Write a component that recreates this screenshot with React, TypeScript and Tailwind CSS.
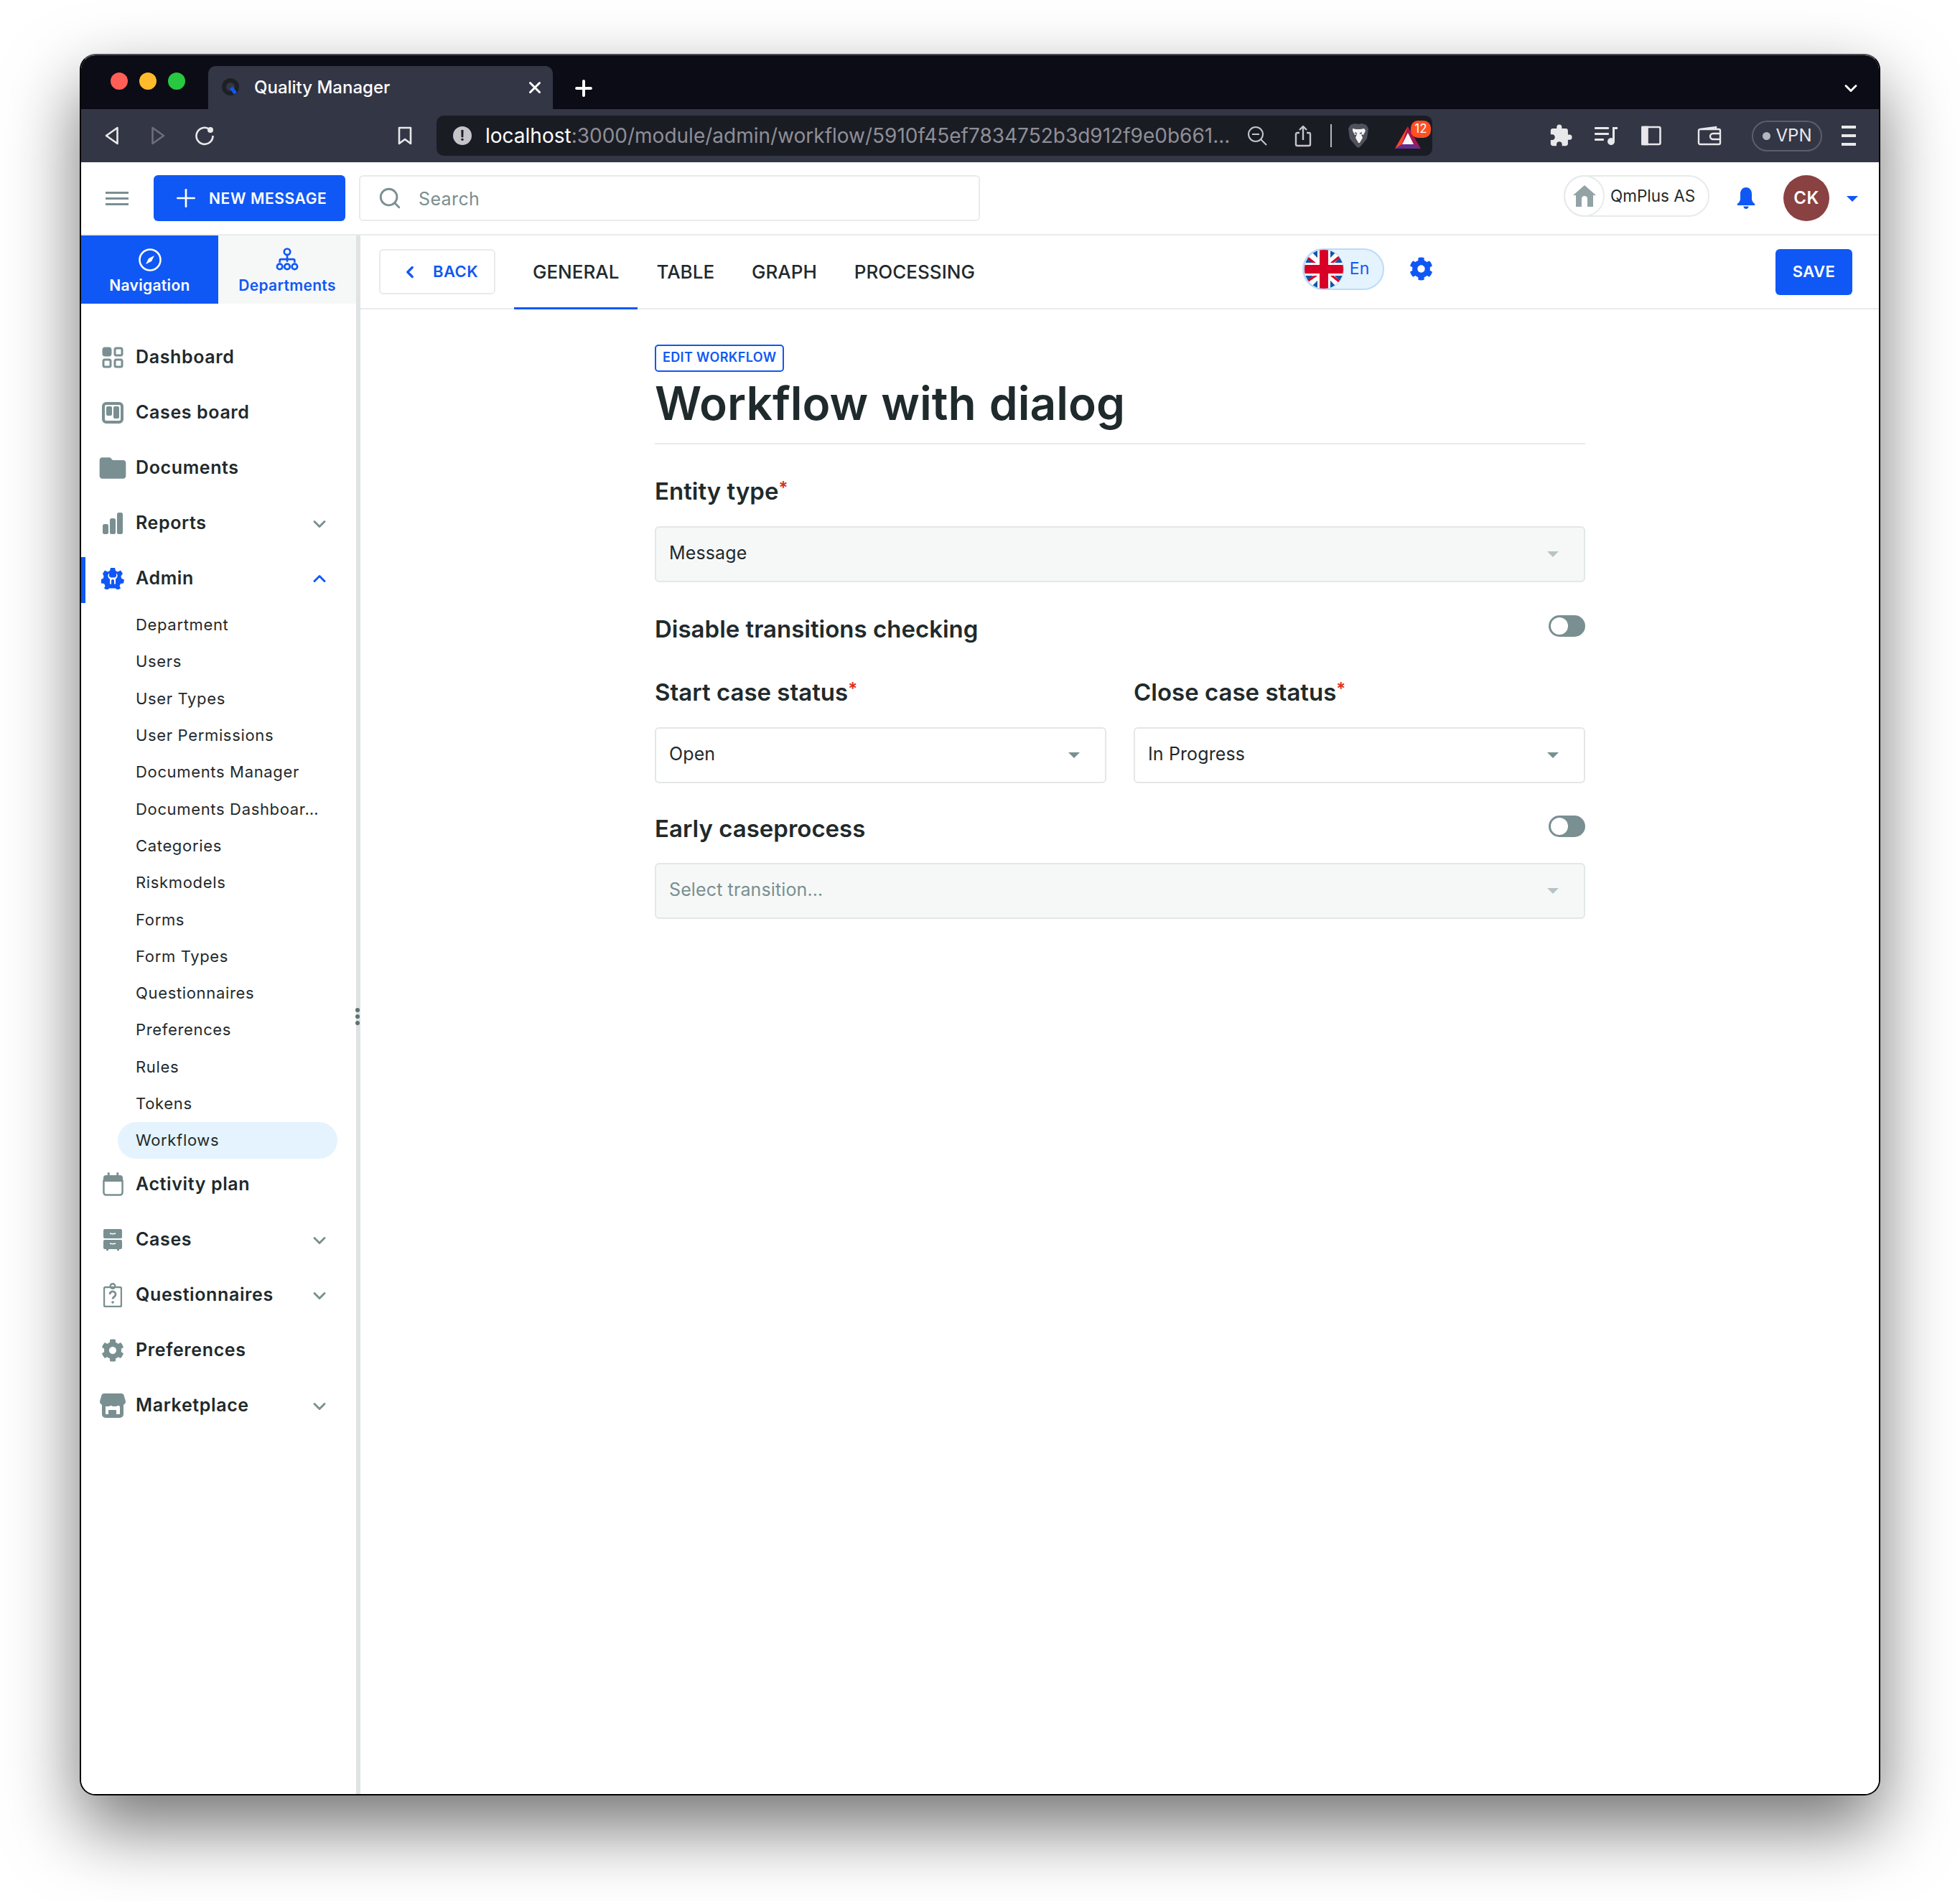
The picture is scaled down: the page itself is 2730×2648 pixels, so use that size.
import React from 'react';
import { ChevronDown, ChevronLeft, ChevronUp, Plus, Search, X } from 'lucide-react';
import { FaCog } from 'react-icons/fa';
import { MdExtension, MdFolder } from 'react-icons/md';

const gray = 'text-[#7a8f91]';

function Back({ className }: { className?: string }) {
  return (
    <svg viewBox="0 0 20 26" className={className} fill="none" stroke="currentColor" strokeWidth="2.6" strokeLinejoin="round">
      <path d="M17.5 2 2 13l15.500 11z" />
    </svg>
  );
}

function DashboardIcon() {
  return (
    <svg viewBox="0 0 30 30" className={`w-[30px] h-[30px] ${gray}`} fill="none" stroke="currentColor" strokeWidth="3">
      <rect x="2" y="2" width="10" height="10" rx="2.500" fill="currentColor" />
      <rect x="18" y="2" width="10" height="10" rx="2" />
      <rect x="2" y="18" width="10" height="10" rx="2" />
      <rect x="18" y="18" width="10" height="10" rx="2" />
    </svg>
  );
}

function BoardIcon() {
  return (
    <svg viewBox="0 0 30 30" className={`w-[30px] h-[30px] ${gray}`} fill="currentColor">
      <path fillRule="evenodd" d="M6 0h18a6 6 0 0 1 6 6v18a6 6 0 0 1-6 6H6a6 6 0 0 1-6-6V6a6 6 0 0 1 6-6zm0 4a2 2 0 0 0-2 2v18a2 2 0 0 0 2 2h18a2 2 0 0 0 2-2V6a2 2 0 0 0-2-2z" />
      <rect x="6" y="6" width="8" height="13" rx="2" />
      <rect x="16" y="6" width="8" height="17" rx="2" />
    </svg>
  );
}

function BarsIcon() {
  return (
    <svg viewBox="0 0 28 30" className={`w-[28px] h-[30px] ${gray}`} fill="currentColor">
      <rect x="0" y="16" width="8" height="14" rx="2.500" />
      <rect x="10" y="8" width="8" height="22" rx="2.500" />
      <rect x="20" y="0" width="8" height="30" rx="2.500" />
    </svg>
  );
}

function AdminIcon() {
  return (
    <svg viewBox="0 0 32 30" className="w-[32px] h-[30px] text-[#1058f5]" fill="currentColor">
      <path d="M13 0h6l1 4 3 1.500 4-2 3 4.500-2.500 3.500.5 3 4 2-1 5-4 .5-1.500 3 1.500 3.500-4.500 2.500-2.500-2.500h-9l-2.500 2.500-4.500-2.500 1.500-3.500-1.500-3-4-.5-1-5 4-2 .5-3L2 8l3-4.500 4 2L12 4z" />
      <path d="M11 7.500c-2.500 2.500-2 6 1 8v7h8v-7c3-2 3.500-5.500 1-8v4.500l-2.500 1.500h-5L11 12z" fill="#fff" />
      <rect x="14" y="16" width="4" height="8" rx="2" />
    </svg>
  );
}

function CalendarIcon() {
  return (
    <svg viewBox="0 0 30 34" className={`w-[29px] h-[33px] ${gray}`} fill="none" stroke="currentColor" strokeWidth="2.600">
      <path d="M1.500 12h27v17a3.500 3.500 0 0 1-3.500 3.500H5A3.500 3.500 0 0 1 1.500 29z" />
      <path d="M5 4h20a4 4 0 0 1 4 4v5H1V8a4 4 0 0 1 4-4z" fill="currentColor" stroke="none" />
      <rect x="7" y="0" width="3" height="6" rx="1.500" fill="currentColor" stroke="none" />
      <rect x="20" y="0" width="3" height="6" rx="1.500" fill="currentColor" stroke="none" />
    </svg>
  );
}

function DrawerIcon() {
  return (
    <svg viewBox="0 0 26 30" className={`w-[26px] h-[30px] ${gray}`} fill="currentColor">
      <rect x="0" y="0" width="26" height="13" rx="2" />
      <rect x="0" y="15" width="26" height="13" rx="2" />
      <rect x="4" y="27" width="3" height="3" />
      <rect x="19" y="27" width="3" height="3" />
      <path d="M9 6q4 1.500 8 0M9 20q4 1.500 8 0" stroke="#fff" strokeWidth="1.500" fill="none" />
    </svg>
  );
}

function ClipboardIcon() {
  return (
    <svg viewBox="0 0 26 34" className={`w-[26px] h-[34px] ${gray}`} fill="none" stroke="currentColor" strokeWidth="2.400">
      <path d="M8 6H3a2 2 0 0 0-2 2v23a2 2 0 0 0 2 2h20a2 2 0 0 0 2-2V8a2 2 0 0 0-2-2h-5" />
      <circle cx="13" cy="4.500" r="3.300" />
      <path d="M8 6h10" />
      <path d="M9 16a4 4 0 1 1 6.500 3c-1.500 1-2.500 1.800-2.500 3.500" strokeWidth="2.800" />
      <circle cx="13" cy="27" r="1.800" fill="currentColor" stroke="none" />
    </svg>
  );
}

function StoreIcon() {
  return (
    <svg viewBox="0 0 36 34" className={`w-[37px] h-[34px] ${gray}`} fill="currentColor">
      <path d="M6 0h24c2 0 3 1 3.500 2.500L36 11c0 3-2 5-5 5H5c-3 0-5-2-5-5l2.500-8.500C3 1 4 0 6 0z" />
      <path fillRule="evenodd" d="M3 12h30v17a5 5 0 0 1-5 5H8a5 5 0 0 1-5-5zm5 6v10a1 1 0 0 0 1 1h3v-6h11v6h4a1 1 0 0 0 1-1V18z" />
      <path d="M8 18q2.500 2 5 0t5 0 5 0 5 0v3H8z" fill="#fff" />
    </svg>
  );
}

function HomeIcon() {
  return (
    <svg viewBox="0 0 32 30" className="w-[32px] h-[30px] text-[#93a3a5]" fill="currentColor">
      <path fillRule="evenodd" d="M16 0 32 14h-4v16h-8V19a4 4 0 0 0-8 0v11H4V14H0z" />
    </svg>
  );
}

function BellIcon() {
  return (
    <svg viewBox="0 0 26 30" className="w-[26px] h-[30px] text-[#1058f5]" fill="currentColor">
      <path d="M13 0c5 0 8 4 8 9v7c0 3 2 5 4 7 1 1 .5 2-1 2H2c-1.500 0-2-1-1-2 2-2 4-4 4-7V9c0-5 3-9 8-9z" />
      <path d="M9.500 26.500h7c0 2-1.500 3.500-3.500 3.500s-3.500-1.500-3.500-3.500z" />
    </svg>
  );
}

function UkFlag() {
  return (
    <svg viewBox="0 0 56 58" className="w-[56px] h-[58px] shrink-0">
      <clipPath id="flag"><circle cx="28" cy="29" r="27.500" /></clipPath>
      <g clipPath="url(#flag)">
        <rect width="56" height="58" fill="#0f57a8" />
        <path d="M0 0l56 58M56 0 0 58" stroke="#fff" strokeWidth="9" />
        <path d="M2 10l16 13M54 8 38 21M2 48l16-11M54 50 38 37" stroke="#d80027" strokeWidth="3" />
        <rect x="19" width="18" height="58" fill="#fff" />
        <rect y="20" width="56" height="18" fill="#fff" />
        <rect x="22" width="12" height="58" fill="#d80027" />
        <rect y="23" width="56" height="12" fill="#d80027" />
      </g>
      <circle cx="28" cy="29" r="27.500" fill="none" stroke="#bcdcf8" strokeWidth="1" />
    </svg>
  );
}

function Toggle({ className }: { className?: string }) {
  return (
    <span className={`block w-[51px] h-[30px] rounded-full bg-[#7a8f91] p-[3px] ${className ?? ''}`}>
      <span className="block w-[24px] h-[24px] rounded-full bg-white" />
    </span>
  );
}

function Caret({ className }: { className: string }) {
  return <span className={`w-0 h-0 border-x-[8px] border-x-transparent border-t-[8px] ${className}`} />;
}

function Field({ value, muted, placeholder, className }: { value: string; muted?: boolean; placeholder?: boolean; className?: string }) {
  return (
    <div className={`h-[78px] flex items-center justify-between pl-[18px] pr-[35px] rounded-[6px] border-2 text-[25px] ${muted ? 'bg-[#f6f8f8] border-[#e3e7e7]' : 'bg-white border-[#e3e7e7]'} ${placeholder ? 'text-[#7a8f91]' : 'text-[#1f2a2c]'} ${className ?? ''}`}>
      <span className="tracking-[0.005em] mb-[3px]">{value}</span>
      <Caret className={muted ? 'border-t-[#b7c4c5]' : 'border-t-[#7a8f91]'} />
    </div>
  );
}

function Label({ children, required }: { children: React.ReactNode; required?: boolean }) {
  return (
    <div className="text-[33px] leading-[42px] font-semibold text-[#1f2a2c]">
      {children}
      {required && <span className="text-[#e0301e] text-[24px] relative top-[-8px]">*</span>}
    </div>
  );
}

const topItems: [string, React.ReactNode, boolean][] = [
  ['Dashboard', <DashboardIcon />, false],
  ['Cases board', <BoardIcon />, false],
  ['Documents', <MdFolder className={`w-[44px] h-[44px] shrink-0 ${gray}`} />, false],
  ['Reports', <BarsIcon />, true],
];

const subItems = ['Department', 'Users', 'User Types', 'User Permissions', 'Documents Manager', 'Documents Dashboar…', 'Categories', 'Riskmodels', 'Forms', 'Form Types', 'Questionnaires', 'Preferences', 'Rules', 'Tokens'];

const bottomItems: [string, React.ReactNode, boolean][] = [
  ['Activity plan', <CalendarIcon />, false],
  ['Cases', <DrawerIcon />, true],
  ['Questionnaires', <ClipboardIcon />, true],
  ['Preferences', <FaCog className={`w-[32px] h-[32px] ${gray}`} />, false],
  ['Marketplace', <StoreIcon />, true],
];

function NavRow({ label, icon, chevron }: { label: string; icon: React.ReactNode; chevron: boolean }) {
  return (
    <div className="h-[77px] flex items-center pl-[26px] pr-[37px]">
      <span className="w-[50px] flex items-center"><span className="w-[36px] flex justify-center">{icon}</span></span>
      <span className="flex-1 text-[25px] font-semibold tracking-[0.025em] text-[#1f2a2c]">{label}</span>
      {chevron && <ChevronDown className={`w-[28px] h-[28px] mt-[2px] ${gray}`} strokeWidth={2.500} />}
    </div>
  );
}

function Sidebar() {
  return (
    <aside className="relative w-[389px] shrink-0 border-r-[6px] border-[#dfe3e3] bg-white">
      <div className="h-[95px] flex text-[21px] font-semibold tracking-[0.015em]">
        <div className="w-[191px] bg-[#1058f5] text-white flex flex-col items-center justify-center gap-[3px] pt-[8px]">
          <svg viewBox="0 0 34 34" className="w-[34px] h-[34px]" fill="none" stroke="currentColor" strokeWidth="2.500">
            <circle cx="17" cy="17" r="14.500" />
            <path d="M23 11l-8 4-4 8 8-4z" fill="currentColor" stroke="none" />
          </svg>
          Navigation
        </div>
        <div className="w-[192px] bg-[#f6f8f8] text-[#1058f5] flex flex-col items-center justify-center gap-[3px] pt-[8px]">
          <svg viewBox="0 0 34 36" className="w-[32px] h-[34px]" fill="none" stroke="currentColor" strokeWidth="2.800">
            <circle cx="17" cy="6" r="4.500" />
            <path d="M17 11v10M6 22v-3a2 2 0 0 1 2-2h18a2 2 0 0 1 2 2v3" />
            <circle cx="6" cy="28" r="4" />
            <circle cx="17" cy="28" r="4" />
            <circle cx="28" cy="28" r="4" />
          </svg>
          Departments
        </div>
      </div>
      <div className="pt-[36px]">
        {topItems.map(([label, icon, chevron]) => (
          <NavRow key={label} label={label} icon={icon} chevron={chevron} />
        ))}
        <div className="relative mt-[9px]">
          <div className="absolute left-0 top-0 w-[6px] h-[64px] bg-[#1058f5]" />
          <div className="h-[64px] flex items-center pl-[26px] pr-[37px] pb-[5px]">
            <span className="w-[50px] flex items-center"><span className="w-[36px] flex justify-center"><AdminIcon /></span></span>
            <span className="flex-1 text-[25px] font-semibold tracking-[0.025em] text-[#1f2a2c]">Admin</span>
            <ChevronUp className="w-[28px] h-[28px] text-[#1058f5]" strokeWidth={2.500} />
          </div>
        </div>
        <div className="pt-[5px]">
          {subItems.map((s) => (
            <div key={s} className="h-[51.300px] flex items-center pl-[76px] text-[22px] tracking-[0.03em] text-[#1f2a2c]">{s}</div>
          ))}
          <div className="h-[51px] ml-[51px] mr-[26px] rounded-full bg-[#e4f3fd] flex items-center pl-[25px] text-[22px] tracking-[0.03em] text-[#1f2a2c]">Workflows</div>
        </div>
        <div className="-mt-[3px]">
          {bottomItems.map(([label, icon, chevron]) => (
            <NavRow key={label} label={label} icon={icon} chevron={chevron} />
          ))}
        </div>
      </div>
      <div className="absolute right-[-5px] top-[1076px] flex flex-col gap-[3px]">
        <span className="w-[6px] h-[6px] rounded-full bg-[#5f7274]" />
        <span className="w-[6px] h-[6px] rounded-full bg-[#5f7274]" />
        <span className="w-[6px] h-[6px] rounded-full bg-[#5f7274]" />
      </div>
    </aside>
  );
}

function BrowserChrome() {
  return (
    <>
      <div className="h-[75px] bg-[#0b0c15] flex shrink-0">
        <div className="flex items-center gap-[16px] pl-[41px] w-[177px] h-[78px] -mt-[3px]">
          <span className="w-[24px] h-[24px] rounded-full bg-[#ff5f57]" />
          <span className="w-[24px] h-[24px] rounded-full bg-[#ffbb2c]" />
          <span className="w-[24px] h-[24px] rounded-full bg-[#28c840]" />
        </div>
        <div className="mt-[15px] w-[480px] bg-[#333645] rounded-t-[10px] flex items-center pl-[19px] pr-[12px] text-white">
          <svg viewBox="0 0 26 26" className="w-[26px] h-[26px]">
            <circle cx="12" cy="12" r="9" fill="none" stroke="#1d2024" strokeWidth="6" />
            <path d="M13 13l6 8" stroke="#1058f5" strokeWidth="5" />
          </svg>
          <span className="ml-[19px] text-[24px] font-medium flex-1">Quality Manager</span>
          <X className="w-[26px] h-[26px]" strokeWidth={2.800} />
        </div>
        <Plus className="w-[34px] h-[34px] text-white ml-[26px] mt-[29px]" strokeWidth={2.800} />
        <ChevronDown className="w-[28px] h-[28px] text-white ml-auto mr-[25px] mt-[32px]" strokeWidth={2.500} />
      </div>
      <div className="h-[74px] bg-[#333645] flex items-center shrink-0 text-[#e8e8ea]">
        <Back className="w-[20px] h-[26px] ml-[33px]" />
        <Back className="w-[20px] h-[26px] ml-[44px] rotate-180 text-[#6c6e7b]" />
        <svg viewBox="0 0 28 28" className="w-[28px] h-[28px] ml-[41px]" fill="none" stroke="currentColor" strokeWidth="2.600">
          <path d="M20 4.500A11.500 11.500 0 1 0 25.500 14" />
          <circle cx="22" cy="6" r="4" fill="currentColor" stroke="none" />
        </svg>
        <svg viewBox="0 0 20 26" className="w-[20px] h-[26px] ml-[255px]" fill="none" stroke="currentColor" strokeWidth="2.600" strokeLinejoin="round">
          <path d="M2 2h16v22l-8-6-8 6z" />
        </svg>
        <div className="ml-[34px] w-[1387px] h-[56px] bg-[#1a1c24] rounded-[10px] flex items-center pl-[23px]">
          <span className="w-[26px] h-[26px] shrink-0 rounded-full bg-[#c4c5ca] text-[#1a1c24] text-[20px] font-bold flex items-center justify-center">!</span>
          <span className="ml-[19px] w-[1040px] shrink-0 text-[28px] whitespace-nowrap">
            <span className="text-white">localhost</span>
            <span className="text-[#8e8f96]">:3000/module/admin/workflow/5910f45ef7834752b3d912f9e0b661...</span>
          </span>
          <svg viewBox="0 0 28 28" className="w-[28px] h-[28px] ml-[21px] shrink-0" fill="none" stroke="#c4c5ca" strokeWidth="2">
            <circle cx="12" cy="12" r="10" />
            <path d="M7 12h10M19 19l8 8" />
          </svg>
          <svg viewBox="0 0 24 32" className="w-[24px] h-[32px] ml-[38px] shrink-0" fill="none" stroke="#c4c5ca" strokeWidth="2.400" strokeLinejoin="round">
            <path d="M7 12H4a2 2 0 0 0-2 2v14a2 2 0 0 0 2 2h16a2 2 0 0 0 2-2V14a2 2 0 0 0-2-2h-3M12 22V3M7 8l5-5 5 5" />
          </svg>
          <span className="w-[2px] h-[32px] shrink-0 bg-[#b5b6bb] ml-[26px]" />
          <svg viewBox="0 0 30 36" className="w-[30px] h-[36px] ml-[22px] shrink-0">
            <path d="M4 3l6-2 5 1 5-1 6 2 3 5-2 14-9 11-3 2-3-2-9-11L1 8z" fill="#4f515d" />
            <path d="M7 8l5 1h6l5-1 2 3-3 6-3-1 2 5-3 5-1 2h-2l-1-2-3-5 2-5-3 1-3-6z" fill="#f4f4f5" />
            <path d="M10 14l3 1M20 14l-3 1" stroke="#4f515d" strokeWidth="1.500" />
          </svg>
          <svg viewBox="0 0 36 31" className="w-[36px] h-[31px] ml-[36px] mt-[4px] shrink-0">
            <path d="M18 0 36 31H0z" fill="#a8174f" />
            <path d="M18 0 0 31l9-5z" fill="#ff4724" />
            <path d="M18 9l8 16H10z" fill="#f7f7f7" />
            <path d="M0 31l9-6h18l9 6z" fill="#662d91" />
          </svg>
          <span className="relative -ml-[14px] -mt-[18px] w-[28px] h-[24px] shrink-0 rounded-[10px] bg-[#ff4f23] text-white text-[17px] flex items-center justify-center">12</span>
        </div>
        <MdExtension className="w-[34px] h-[34px] ml-[162px]" />
        <svg viewBox="0 0 32 28" className="w-[32px] h-[28px] ml-[30px]" fill="currentColor">
          <rect y="2" width="20" height="3" rx="1" />
          <rect y="10" width="20" height="3" rx="1" />
          <rect y="18" width="13" height="3" rx="1" />
          <path d="M25 2h7v3h-4v17a5 5 0 1 1-3-4.500z" />
        </svg>
        <svg viewBox="0 0 28 28" className="w-[28px] h-[28px] ml-[33px]" fill="none" stroke="currentColor" strokeWidth="2.600">
          <rect x="1.500" y="2" width="25" height="24" rx="2" />
          <rect x="1.500" y="2" width="7" height="24" fill="currentColor" />
        </svg>
        <svg viewBox="0 0 34 28" className="w-[34px] h-[28px] ml-[50px]" fill="none" stroke="currentColor" strokeWidth="2.400">
          <path d="M4 5 26 2v3M2 7a2 2 0 0 1 2-2h26a2 2 0 0 1 2 2v17a2 2 0 0 1-2 2H4a2 2 0 0 1-2-2z" />
          <path d="M32 11H22a4 4 0 0 0 0 8h10" />
        </svg>
        <div className="ml-[42px] w-[98px] h-[43px] rounded-full border-2 border-[#5b5e6e] flex items-center justify-center gap-[8px] text-[24px]">
          <span className="w-[11px] h-[11px] rounded-full bg-[#b5b7c0]" />
          VPN
        </div>
        <div className="ml-[27px] flex flex-col gap-[8px]">
          <span className="w-[20px] h-[4px] bg-[#e8e8ea]" />
          <span className="w-[20px] h-[4px] bg-[#e8e8ea]" />
          <span className="w-[20px] h-[4px] bg-[#e8e8ea]" />
        </div>
      </div>
    </>
  );
}

function AppHeader() {
  return (
    <div className="h-[102px] border-b-2 border-[#e8ebeb] bg-white flex items-center shrink-0">
      <div className="ml-[34px] w-[32px] flex flex-col gap-[5px]">
        <span className="h-[3px] bg-[#7a8f91]" />
        <span className="h-[3px] bg-[#7a8f91]" />
        <span className="h-[3px] bg-[#7a8f91]" />
      </div>
      <div className="ml-[35px] w-[267px] h-[64px] bg-[#1058f5] rounded-[6px] flex items-center text-white pl-[25px] text-[21px] font-semibold tracking-[0.03em]">
        <Plus className="w-[40px] h-[40px] mr-[12px]" strokeWidth={1.600} />
        <span className="mt-[2px]">NEW MESSAGE</span>
      </div>
      <div className="ml-[19px] w-[865px] h-[64px] rounded-[6px] border-2 border-[#e8ebeb] flex items-center pl-[24px] text-[25px] text-[#7a8f91] tracking-[0.015em]">
        <Search className="w-[34px] h-[34px] mr-[23px]" strokeWidth={2} />
        <span className="mt-[4px]">Search</span>
      </div>
      <div className="ml-auto w-[203px] h-[58px] rounded-full border-2 border-[#e8ebeb] flex items-center -mt-[7px]">
        <span className="w-[57px] h-[58px] rounded-full border-2 border-[#e8ebeb] flex items-center justify-center shrink-0 -ml-[2px]">
          <HomeIcon />
        </span>
        <span className="ml-[8px] text-[22.500px] text-[#1f2a2c] whitespace-nowrap">QmPlus AS</span>
      </div>
      <span className="ml-[38px]"><BellIcon /></span>
      <div className="ml-[39px] w-[64px] h-[64px] rounded-full bg-[#8a4141] text-white text-[24px] font-semibold flex items-center justify-center tracking-[0.02em]">CK</div>
      <Caret className="ml-[24px] mr-[29px] mt-[2px] border-t-[#1058f5]" />
    </div>
  );
}

function MainPanel() {
  return (
    <main className="flex-1 min-w-0 bg-white">
      <div className="h-[103px] border-b-2 border-[#e8ebeb] flex items-center pl-[26px] pr-[37px]">
        <div className="w-[162px] h-[63px] rounded-[6px] border-2 border-[#e8ebeb] flex items-center pl-[28px] text-[#1058f5] text-[22px] font-semibold tracking-[0.02em]">
          <ChevronLeft className="w-[26px] h-[26px] mr-[19px]" strokeWidth={3} />
          BACK
        </div>
        <div className="ml-[26px] flex h-full text-[26px] font-medium text-[#1f2a2c]">
          <div className="relative px-[26px] flex items-center">
            GENERAL
            <span className="absolute left-0 right-0 bottom-[-2px] h-[3px] bg-[#1058f5]" />
          </div>
          <div className="px-[26px] flex items-center">TABLE</div>
          <div className="px-[26px] flex items-center">GRAPH</div>
          <div className="px-[26px] flex items-center">PROCESSING</div>
        </div>
        <div className="ml-[430px] -mt-[8px] w-[114px] h-[58px] rounded-full bg-[#e4f3fd] border-2 border-[#bcdcf8] flex items-center">
          <UkFlag />
          <span className="ml-[8px] text-[23px] text-[#1058f5]">En</span>
        </div>
        <FaCog className="ml-[35px] -mt-[8px] w-[33px] h-[33px] text-[#1058f5]" />
        <div className="ml-auto w-[107px] h-[64px] rounded-[6px] bg-[#1058f5] text-white text-[22px] font-semibold flex items-center justify-center tracking-[0.02em]">SAVE</div>
      </div>
      <div className="ml-[410px] w-[1296px] pt-[49px]">
        <div className="inline-block h-[38px] px-[9px] rounded-[5px] border-2 border-[#1058f5] text-[#1058f5] text-[18px] font-semibold leading-[32px] tracking-[0.02em]">EDIT WORKFLOW</div>
        <h1 className="mt-[3px] text-[64px] leading-[82px] font-semibold text-[#1f2a2c] [word-spacing:2px] pb-[14px] border-b-2 border-[#e8ebeb]">Workflow with dialog</h1>
        <div className="mt-[44px]">
          <Label required>Entity type</Label>
          <Field value="Message" muted className="mt-[24px]" />
        </div>
        <div className="mt-[44px] flex items-start justify-between">
          <Label>Disable transitions checking</Label>
          <Toggle className="mt-[2px]" />
        </div>
        <div className="mt-[46px] flex gap-[38px]">
          <div className="flex-1">
            <Label required>Start case status</Label>
            <Field value="Open" className="mt-[24px]" />
          </div>
          <div className="flex-1">
            <Label required>Close case status</Label>
            <Field value="In Progress" className="mt-[24px]" />
          </div>
        </div>
        <div className="mt-[42px] flex items-start justify-between">
          <Label>Early caseprocess</Label>
          <Toggle className="mt-[3px]" />
        </div>
        <Field value="Select transition…" muted placeholder className="mt-[27px]" />
      </div>
    </main>
  );
}

export default function App() {
  return (
    <div className="w-[2730px] h-[2648px] bg-white pt-[75px] pl-[111px] font-['Inter',sans-serif] overflow-hidden">
      <div className="w-[2508px] h-[2426px] flex flex-col rounded-[22px] overflow-hidden border-2 border-black border-t-[#4d4e55] bg-white shadow-[0_44px_100px_rgba(0,0,0,0.55)]">
        <BrowserChrome />
        <AppHeader />
        <div className="flex-1 flex min-h-0">
          <Sidebar />
          <MainPanel />
        </div>
      </div>
    </div>
  );
}
